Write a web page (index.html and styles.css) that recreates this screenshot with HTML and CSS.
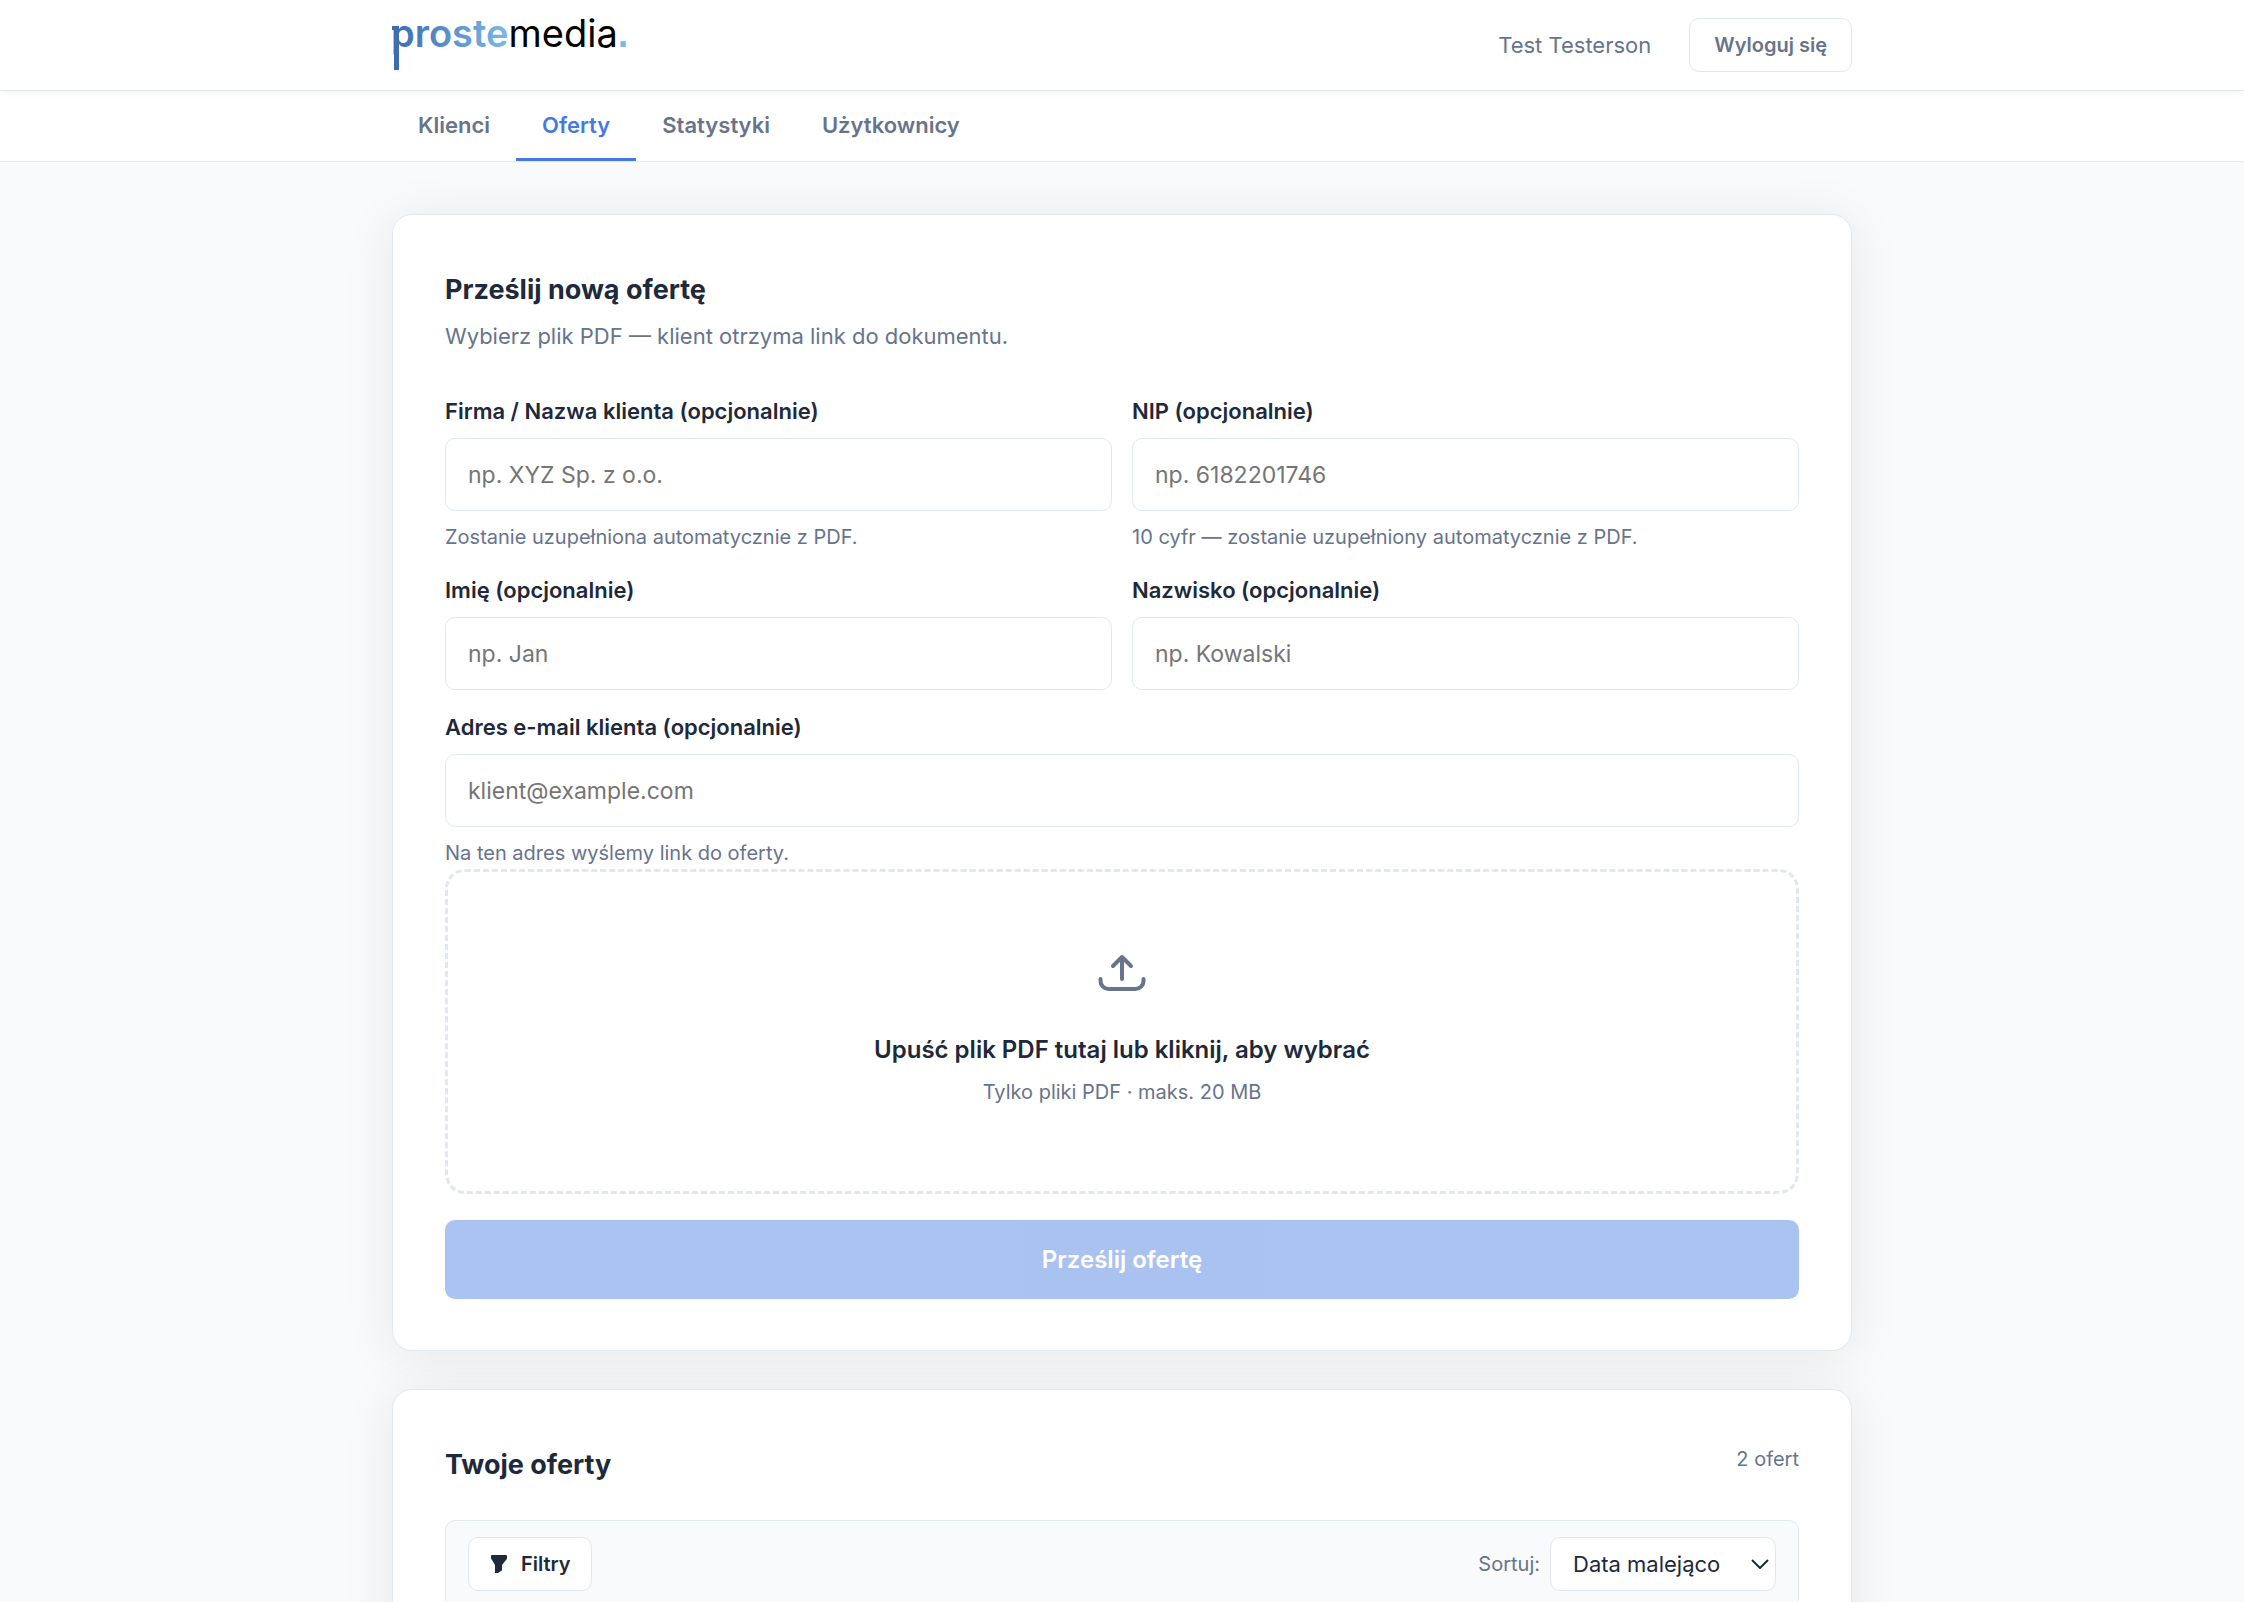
FILE: index.html
```
<!DOCTYPE html>
<html lang="pl">
<head>
  <meta charset="UTF-8">
  <meta name="viewport" content="width=device-width, initial-scale=1.0">
  <title>Oferty - prostemedia</title>
  <link rel="stylesheet" href="styles.css">
</head>
<body>
  <!-- Header -->
  <header class="header">
    <div class="container header-inner">
      <a href="#" class="logo" aria-label="prostemedia">
        <svg width="240" height="56" viewBox="0 0 240 56">
          <defs>
            <linearGradient id="logo-gradient" gradientUnits="userSpaceOnUse" x1="0" y1="0" x2="118" y2="0">
              <stop offset="0" stop-color="#3b6bb0" />
              <stop offset="1" stop-color="#7db9e8" />
            </linearGradient>
          </defs>
          <path d="M0 14h7v44H2V18H0z" fill="#3b6bb0" />
          <text x="-1" y="35" class="logo-text"><tspan class="logo-proste">proste</tspan><tspan>media</tspan><tspan class="logo-dot">.</tspan></text>
        </svg>
      </a>
      <div class="user">
        <span class="user-name">Test Testerson</span>
        <button type="button" class="btn-outline btn-logout">Wyloguj się</button>
      </div>
    </div>
  </header>

  <!-- Tabs -->
  <nav class="nav">
    <div class="container nav-inner">
      <a href="#">Klienci</a>
      <a href="#" class="active">Oferty</a>
      <a href="#">Statystyki</a>
      <a href="#">Użytkownicy</a>
    </div>
  </nav>

  <main class="container main">
    <!-- Upload form -->
    <section class="card">
      <h1>Prześlij nową ofertę</h1>
      <p class="subtitle">Wybierz plik PDF — klient otrzyma link do dokumentu.</p>

      <form>
        <div class="form-grid">
          <div class="field">
            <label for="company">Firma / Nazwa klienta (opcjonalnie)</label>
            <input type="text" id="company" placeholder="np. XYZ Sp. z o.o.">
            <p class="hint">Zostanie uzupełniona automatycznie z PDF.</p>
          </div>
          <div class="field">
            <label for="nip">NIP (opcjonalnie)</label>
            <input type="text" id="nip" placeholder="np. 6182201746">
            <p class="hint">10 cyfr — zostanie uzupełniony automatycznie z PDF.</p>
          </div>
          <div class="field">
            <label for="first-name">Imię (opcjonalnie)</label>
            <input type="text" id="first-name" placeholder="np. Jan">
          </div>
          <div class="field">
            <label for="last-name">Nazwisko (opcjonalnie)</label>
            <input type="text" id="last-name" placeholder="np. Kowalski">
          </div>
          <div class="field field-wide">
            <label for="email">Adres e-mail klienta (opcjonalnie)</label>
            <input type="email" id="email" placeholder="klient@example.com">
            <p class="hint">Na ten adres wyślemy link do oferty.</p>
          </div>
        </div>

        <button type="button" class="dropzone">
          <svg class="upload-icon" viewBox="0 0 62 62" fill="none" stroke="currentColor" stroke-width="4" stroke-linecap="round" stroke-linejoin="round">
            <path d="M31 43V21M22 30l9-9 9 9" />
            <path d="M9.5 43v2a8 8 0 0 0 8 8h27a8 8 0 0 0 8-8v-2" />
          </svg>
          <span class="dropzone-title">Upuść plik PDF tutaj lub kliknij, aby wybrać</span>
          <span class="dropzone-sub">Tylko pliki PDF · maks. 20 MB</span>
        </button>

        <button type="submit" class="btn-submit" disabled>Prześlij ofertę</button>
      </form>
    </section>

    <!-- Offers list -->
    <section class="card">
      <div class="list-header">
        <h2>Twoje oferty</h2>
        <span class="count">2 ofert</span>
      </div>
      <div class="toolbar">
        <button type="button" class="btn-outline btn-filter">
          <svg width="20" height="20" viewBox="0 0 20 20" fill="currentColor">
            <path d="M2 2q0-1 1-1h14q1 0 1 1v2q0 1-1 2l-4 5v5q0 1-1 1l-3 2H6v-8L3 6Q2 5 2 4z" />
          </svg>
          Filtry
        </button>
        <div class="sort">
          <label for="sort">Sortuj:</label>
          <div class="select-wrap">
            <select id="sort">
              <option>Data malejąco</option>
              <option>Data rosnąco</option>
            </select>
            <svg class="chevron" width="18" height="10" viewBox="0 0 18 10" fill="none" stroke="currentColor" stroke-width="2">
              <path d="M1 1l8 8 8-8" />
            </svg>
          </div>
        </div>
      </div>
    </section>
  </main>
</body>
</html>
```
FILE: styles.css
```
/* General Styles */
* {
  box-sizing: border-box;
}

body {
  margin: 0;
  font-family: Inter, "Liberation Sans", sans-serif;
  font-size: 22px;
  line-height: 36px;
  color: #1e293b;
  background-color: #f8fafc;
}

h1,
h2,
p {
  margin: 0;
}

button,
input,
select {
  font-family: inherit;
  color: inherit;
}

.container {
  width: 100%;
  max-width: 1460px;
  margin: 0 auto;
}

/* Header */
.header {
  position: relative;
  background-color: white;
  border-bottom: 1px solid #e2e8f0;
  box-shadow: 0 1px 8px rgba(0, 0, 0, 0.06);
  z-index: 1;
}

.header-inner {
  display: flex;
  justify-content: space-between;
  align-items: flex-start;
  height: 90px;
  padding-top: 12px;
}

.logo svg {
  display: block;
  overflow: visible;
}

.logo-text {
  font-size: 38px;
  fill: black;
}

.logo-proste {
  font-weight: 600;
  fill: url(#logo-gradient);
}

.logo-dot {
  font-family: "Liberation Sans", sans-serif;
  font-weight: 700;
  fill: #7db9e8;
}

.user {
  display: flex;
  align-items: center;
  gap: 38px;
  padding-top: 6px;
  color: #67748b;
}

.btn-outline {
  height: 54px;
  padding: 0 20px;
  border: 1px solid #e2e8f0;
  border-radius: 10px;
  background-color: white;
  font-size: 20px;
  font-weight: 600;
  cursor: pointer;
}

.btn-logout {
  padding: 0 24px;
  color: #67748b;
}

/* Tabs */
.nav {
  background-color: white;
  border-bottom: 1px solid #e2e8f0;
}

.nav-inner {
  display: flex;
}

.nav a {
  padding: 16px 26px 15px;
  border-bottom: 3px solid transparent;
  color: #67748b;
  font-weight: 600;
  text-decoration: none;
}

.nav a.active {
  color: #447ae0;
  border-bottom-color: #447ae0;
}

/* Cards */
.main {
  display: flex;
  flex-direction: column;
  gap: 38px;
  padding: 52px 0;
}

.card {
  padding: 52px 52px 51px;
  border: 1px solid #e2e8f0;
  border-radius: 20px;
  background-color: white;
  box-shadow: 0 5px 52px rgba(0, 0, 0, 0.08);
}

h1,
h2 {
  font-size: 27px;
  line-height: 46px;
  font-weight: 700;
}

.subtitle {
  margin: 5px 0 39px;
  color: #67748b;
}

/* Form */
.form-grid {
  display: grid;
  grid-template-columns: 1fr 1fr;
  gap: 19px 20px;
}

.field-wide {
  grid-column: 1 / -1;
}

.field label {
  display: block;
  margin-bottom: 8px;
  line-height: 37px;
  font-weight: 600;
}

.field input {
  display: block;
  width: 100%;
  height: 73px;
  padding: 0 22px;
  border: 1px solid #e2e8f0;
  border-radius: 10px;
  background-color: white;
  font-size: 23px;
}

.field input::placeholder {
  color: #757575;
}

.hint {
  margin-top: 10px;
  font-size: 20px;
  line-height: 32px;
  color: #67748b;
}

.dropzone {
  display: flex;
  flex-direction: column;
  align-items: center;
  width: 100%;
  padding: 64px 52px 83px;
  border: 3px dashed #e2e8f0;
  border-radius: 20px;
  background-color: white;
  cursor: pointer;
}

.upload-icon {
  width: 62px;
  height: 62px;
  margin-bottom: 34px;
  color: #67748b;
}

.dropzone-title {
  font-size: 24px;
  line-height: 36px;
  font-weight: 600;
}

.dropzone-sub {
  margin-top: 8px;
  font-size: 20px;
  line-height: 32px;
  color: #67748b;
}

.btn-submit {
  display: block;
  width: 100%;
  height: 79px;
  margin-top: 26px;
  border: none;
  border-radius: 10px;
  background-color: #447ae0;
  color: white;
  font-size: 24px;
  font-weight: 600;
  opacity: 0.45;
}

/* Offers list */
.list-header {
  display: flex;
  justify-content: space-between;
  align-items: flex-start;
  margin-bottom: 32px;
}

.count,
.sort label {
  font-size: 20px;
  line-height: 34px;
  color: #67748b;
}

.toolbar {
  display: flex;
  justify-content: space-between;
  align-items: center;
  padding: 16px 22px;
  border: 1px solid #e2e8f0;
  border-radius: 10px;
  background-color: #f8fafc;
}

.btn-filter {
  display: flex;
  align-items: center;
  gap: 12px;
}

.sort {
  display: flex;
  align-items: center;
  gap: 10px;
}

.select-wrap {
  position: relative;
}

.sort select {
  display: block;
  height: 54px;
  padding: 0 54px 0 22px;
  border: 1px solid #e2e8f0;
  border-radius: 10px;
  background-color: white;
  font-size: 22px;
  appearance: none;
}

.chevron {
  position: absolute;
  top: 22px;
  right: 7px;
  pointer-events: none;
}
```
